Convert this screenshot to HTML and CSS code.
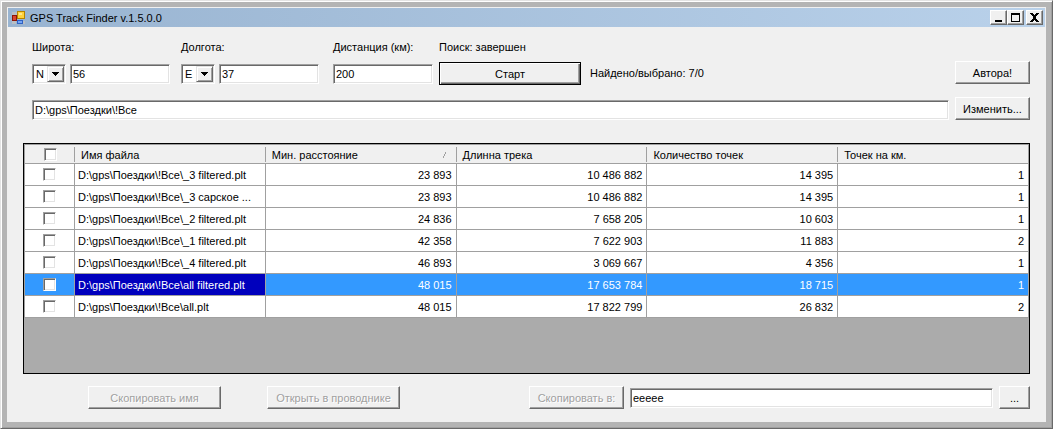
FILE: index.html
```html
<!DOCTYPE html>
<html lang="ru">
<head>
<meta charset="utf-8">
<title>GPS Track Finder v.1.5.0.0</title>
<link rel="stylesheet" href="styles.css">
</head>
<body>
<div class="window">
  <header class="titlebar">
    <svg class="app-icon" width="14" height="14" viewBox="0 0 14 14" aria-hidden="true">
      <path d="M0 1h5v3H0zM0 10h4v3H0zM11 10h2v3h-2z" fill="#b9bec4"/>
      <rect x="0" y="4" width="5" height="6" fill="#8e1508"/>
      <rect x="1" y="5" width="3" height="4" fill="#d8452f"/>
      <rect x="5" y="0" width="8" height="8" fill="#b58300"/>
      <rect x="6" y="1" width="6" height="6" fill="#ffd23d"/>
      <rect x="7" y="2" width="3" height="2" fill="#ffe88a"/>
      <rect x="5" y="9" width="6" height="4" fill="#2f62c4"/>
      <rect x="6" y="10" width="4" height="2" fill="#74a5f5"/>
    </svg>
    <h1 class="title">GPS Track Finder v.1.5.0.0</h1>
    <div class="caption-buttons">
      <button class="caption" type="button" aria-label="Свернуть"><svg width="13" height="11" viewBox="0 0 13 11"><path d="M3 8h7v2H3z"/></svg></button>
      <button class="caption" type="button" aria-label="Развернуть"><svg width="13" height="11" viewBox="0 0 13 11"><path fill-rule="evenodd" d="M2 1h9v9H2zM3 3v6h7V3z"/></svg></button>
      <button class="caption close" type="button" aria-label="Закрыть"><svg width="13" height="11" viewBox="0 0 13 11"><path d="M2 1h3v1h1v1h1V2h1V1h3v1h-1v1H9v1H8v3h1v1h1v1h1v1H8V9H7V8H6v1H5v1H2V9h1V8h1V7h1V4H4V3H3V2H2z"/></svg></button>
    </div>
  </header>

  <main class="form">
    <div class="search">
      <div class="group">
        <label for="lat">Широта:</label>
        <div class="pair">
          <span class="combo">
            <select id="lat-dir" aria-label="Полушарие широты"><option>N</option><option>S</option></select>
            <span class="drop"><svg width="7" height="4" viewBox="0 0 7 4"><path d="M0 0h7v1H6v1H5v1H4v1H3V3H2V2H1V1H0z"/></svg></span>
          </span>
          <input id="lat" class="box coord" type="text" value="56">
        </div>
      </div>
      <div class="group">
        <label for="lon">Долгота:</label>
        <div class="pair">
          <span class="combo">
            <select id="lon-dir" aria-label="Полушарие долготы"><option>E</option><option>W</option></select>
            <span class="drop"><svg width="7" height="4" viewBox="0 0 7 4"><path d="M0 0h7v1H6v1H5v1H4v1H3V3H2V2H1V1H0z"/></svg></span>
          </span>
          <input id="lon" class="box coord" type="text" value="37">
        </div>
      </div>
      <div class="group distance">
        <label for="dist">Дистанция (км):</label>
        <input id="dist" class="box coord" type="text" value="200">
      </div>
      <div class="run">
        <span>Поиск: завершен</span>
        <button class="btn start" type="button">Старт</button>
      </div>
      <span class="found">Найдено/выбрано: 7/0</span>
      <button class="btn side author" type="button">Автора!</button>
    </div>

    <div class="folder">
      <input class="box grow" type="text" aria-label="Папка" value="D:\gps\Поездки\!Все">
      <button class="btn side" type="button">Изменить...</button>
    </div>

    <div class="datagrid">
      <table>
        <colgroup><col class="col-check"><col><col><col><col><col></colgroup>
        <thead>
          <tr>
            <th><input type="checkbox" aria-label="Выбрать все"></th>
            <th>Имя файла</th>
            <th><span class="sorted">Мин. расстояние <svg width="5" height="6" viewBox="0 0 5 6"><path d="M1 6V4h1V2h1V0h1v2H3v2H2v2z" fill="#a0a0a0"/></svg></span></th>
            <th>Длинна трека</th>
            <th>Количество точек</th>
            <th>Точек на км.</th>
          </tr>
        </thead>
        <tbody>
          <tr><td><input type="checkbox" aria-label="_3 filtered.plt"></td><td>D:\gps\Поездки\!Все\_3 filtered.plt</td><td>23 893</td><td>10 486 882</td><td>14 395</td><td>1</td></tr>
          <tr><td><input type="checkbox" aria-label="_3 сарское"></td><td>D:\gps\Поездки\!Все\_3 сарское ...</td><td>23 893</td><td>10 486 882</td><td>14 395</td><td>1</td></tr>
          <tr><td><input type="checkbox" aria-label="_2 filtered.plt"></td><td>D:\gps\Поездки\!Все\_2 filtered.plt</td><td>24 836</td><td>7 658 205</td><td>10 603</td><td>1</td></tr>
          <tr><td><input type="checkbox" aria-label="_1 filtered.plt"></td><td>D:\gps\Поездки\!Все\_1 filtered.plt</td><td>42 358</td><td>7 622 903</td><td>11 883</td><td>2</td></tr>
          <tr><td><input type="checkbox" aria-label="_4 filtered.plt"></td><td>D:\gps\Поездки\!Все\_4 filtered.plt</td><td>46 893</td><td>3 069 667</td><td>4 356</td><td>1</td></tr>
          <tr class="selected"><td><input type="checkbox" aria-label="all filtered.plt"></td><td class="current">D:\gps\Поездки\!Все\all filtered.plt</td><td>48 015</td><td>17 653 784</td><td>18 715</td><td>1</td></tr>
          <tr><td><input type="checkbox" aria-label="all.plt"></td><td>D:\gps\Поездки\!Все\all.plt</td><td>48 015</td><td>17 822 799</td><td>26 832</td><td>2</td></tr>
        </tbody>
      </table>
    </div>

    <div class="actions">
      <button class="btn wide" type="button" disabled>Скопировать имя</button>
      <button class="btn wide explorer" type="button" disabled>Открыть в проводнике</button>
      <button class="btn copy-to" type="button" disabled>Скопировать в:</button>
      <input class="box grow" type="text" aria-label="Папка назначения" value="eeeee">
      <button class="btn browse" type="button">...</button>
    </div>
  </main>
</div>
</body>
</html>
```
FILE: styles.css
```css
* { box-sizing: border-box; }

body {
  margin: 0;
  font: 11px/16px "Liberation Sans", Arial, sans-serif;
  color: #000;
  background: #b4b4b4;
}

button, input, select { font: inherit; color: inherit; margin: 0; border-radius: 0; }

.window {
  min-height: 100vh;
  display: flex;
  flex-direction: column;
  padding: 6px;
  background: #b4b4b4;
  border: 1px solid;
  border-color: #e3e3e3 #696969 #696969 #e3e3e3;
  box-shadow: inset 1px 1px #fff, inset -1px -1px #a0a0a0;
}

.titlebar {
  display: flex;
  align-items: center;
  height: 21px;
  padding: 0 2px 0 4px;
  border: 1px solid #f0f0f0;
  background: linear-gradient(90deg, #99b4d1, #b9d1ea);
}

.title {
  margin: 0 0 0 4px;
  flex: 1;
  font: 11px/16px "Liberation Sans", Arial, sans-serif;
}

.caption-buttons { display: flex; }

.caption {
  width: 17px;
  height: 15px;
  padding: 0;
  display: grid;
  place-items: center;
  background: #f0f0f0;
  border: 1px solid;
  border-color: #fff #696969 #696969 #fff;
  box-shadow: inset -1px -1px #a0a0a0;
}
.caption.close { margin-left: 2px; }

.form {
  flex: 1;
  display: flex;
  flex-direction: column;
  padding: 11px 16px 13px;
  background: #f0f0f0;
}

.search { display: flex; align-items: flex-start; padding-left: 9px; gap: 11px; }
.group { display: flex; flex-direction: column; gap: 9px; }
.pair { display: flex; gap: 4px; }
.distance { margin-left: 3px; }
.run { display: flex; flex-direction: column; gap: 7px; margin-left: -5px; white-space: nowrap; }
.found { margin: 26px auto 0 -2px; white-space: nowrap; }
.author { margin-top: 22px; }

.box, .combo {
  height: 20px;
  background: #fff;
  border: 1px solid;
  border-color: #a0a0a0 #fff #fff #a0a0a0;
  box-shadow: inset 1px 1px #696969, inset -1px -1px #e3e3e3;
}
.box { padding: 0 2px; outline: none; }
.coord { width: 100px; }
.grow { flex: 1; min-width: 0; }

.combo { position: relative; width: 34px; padding: 1px; }
.combo select {
  display: block;
  width: 30px;
  height: 16px;
  padding: 0 0 0 2px;
  border: 0;
  background: none;
  appearance: none;
  outline: none;
}
.drop {
  position: absolute;
  top: 1px;
  right: 1px;
  width: 17px;
  height: 16px;
  display: grid;
  place-items: center;
  pointer-events: none;
  background: #f0f0f0;
  border: 1px solid;
  border-color: #e3e3e3 #696969 #696969 #e3e3e3;
  box-shadow: inset 1px 1px #fff, inset -1px -1px #a0a0a0;
}

.btn {
  height: 23px;
  padding: 0 4px;
  white-space: nowrap;
  background: #f0f0f0;
  border: 1px solid;
  border-color: #fff #696969 #696969 #fff;
  box-shadow: inset -1px -1px #a0a0a0;
}
.btn:disabled { color: #a0a0a0; text-shadow: 1px 1px #fff; }
.start {
  width: 142px;
  border-color: #000;
  box-shadow: inset 1px 1px #fff, inset -1px -1px #696969, inset -2px -2px #a0a0a0;
}
.side { width: 75px; }
.wide { width: 133px; }

.folder { display: flex; align-items: flex-end; gap: 6px; margin-top: 12px; padding-left: 9px; }

.datagrid {
  flex: 1;
  min-height: 200px;
  margin-top: 23px;
  border: 1px solid #000;
  background: #ababab;
}

table { width: 100%; table-layout: fixed; border-collapse: separate; border-spacing: 0; }
.col-check { width: 51px; }

th {
  height: 20px;
  padding: 2px 6px 0;
  font-weight: normal;
  line-height: 16px;
  text-align: left;
  white-space: nowrap;
  border-top: 1px solid #a0a0a0;
  border-bottom: 1px solid #a0a0a0;
  background: linear-gradient(#a0a0a0, #a0a0a0) right 2px / 1px 15px no-repeat #f0f0f0;
}
th:last-child { border-right: 1px solid #a0a0a0; background: #f0f0f0; }

td {
  height: 22px;
  padding: 0 4px 0 3px;
  text-align: right;
  white-space: nowrap;
  overflow: hidden;
  background: #fff;
  border-right: 1px solid #a0a0a0;
  border-bottom: 1px solid #a0a0a0;
}
th:first-child, td:first-child { padding: 0; text-align: center; border-left: 1px solid #a0a0a0; }
td:nth-child(2) { text-align: left; }

.selected td { color: #fff; background: #3399ff; }
.selected .current { background: #0000bd; }

.sorted { display: flex; align-items: center; justify-content: space-between; padding-right: 4px; }

input[type="checkbox"] {
  appearance: none;
  display: block;
  width: 13px;
  height: 13px;
  margin: 0 auto;
  background: #fff;
  border: 1px solid;
  border-color: #a0a0a0 #fff #fff #a0a0a0;
  box-shadow: inset 1px 1px #696969, inset -1px -1px #e3e3e3;
}

.actions { display: flex; align-items: center; gap: 6px; margin-top: 12px; padding-left: 65px; }
.explorer { margin: 0 123px 0 40px; }
.copy-to { width: 95px; }
.browse { width: 31px; }
```
